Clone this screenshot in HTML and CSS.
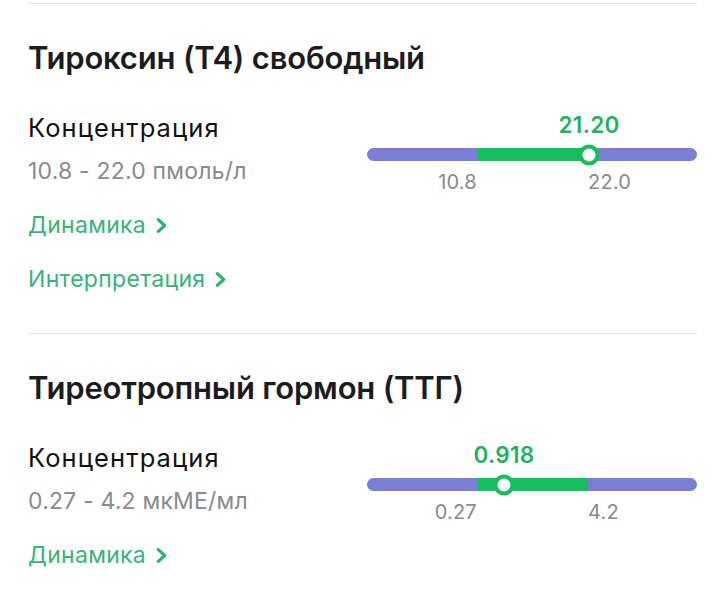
FILE: index.html
```html
<!DOCTYPE html>
<html lang="ru">
<head>
<meta charset="utf-8">
<link rel="stylesheet" href="styles.css">
</head>
<body>
<main class="page">
  <section class="test">
    <h2 class="test-title">Тироксин (Т4) свободный</h2>
    <div class="row">
      <div class="info">
        <div class="param">Концентрация</div>
        <div class="range">10.8 - 22.0 пмоль/л</div>
        <a class="link">Динамика <svg class="chev" viewBox="0 0 10 14"><path d="M2 1.5 L8 7 L2 12.5"/></svg></a>
        <a class="link">Интерпретация <svg class="chev" viewBox="0 0 10 14"><path d="M2 1.5 L8 7 L2 12.5"/></svg></a>
      </div>
      <div class="scale" style="--lo:33.3%;--hi:67%;--val:67.3%">
        <div class="value-row"><span class="value">21.20</span></div>
        <div class="track"><div class="norm"></div><div class="knob"></div></div>
        <div class="labels"><span class="lab lab-lo">10.8</span><span class="lab lab-hi">22.0</span></div>
      </div>
    </div>
  </section>
  <section class="test">
    <h2 class="test-title">Тиреотропный гормон (ТТГ)</h2>
    <div class="row">
      <div class="info">
        <div class="param">Концентрация</div>
        <div class="range">0.27 - 4.2 мкМЕ/мл</div>
        <a class="link">Динамика <svg class="chev" viewBox="0 0 10 14"><path d="M2 1.5 L8 7 L2 12.5"/></svg></a>
      </div>
      <div class="scale" style="--lo:33.3%;--hi:67%;--val:41.5%">
        <div class="value-row"><span class="value">0.918</span></div>
        <div class="track"><div class="norm"></div><div class="knob"></div></div>
        <div class="labels"><span class="lab lab-lo">0.27</span><span class="lab lab-hi">4.2</span></div>
      </div>
    </div>
  </section>
</main>
</body>
</html>
```
FILE: styles.css
```css
* { box-sizing: border-box; }
html, body { margin: 0; padding: 0; background: #fff; }
body {
  font-family: Inter, "Noto Sans", sans-serif;
  color: #1c1c1e;
  overflow: hidden;
}
.page {
  padding: 3px 26px 0 28px;
}
.test {
  border-top: 1px solid #e6e6e6;
  padding: 34px 0 40px;
}
.test-title {
  margin: 0;
  font-size: 31px;
  line-height: 40px;
  font-weight: 600;
  letter-spacing: -0.2px;
}
.row {
  display: flex;
  align-items: flex-start;
  margin-top: 35px;
}
.info {
  flex: 1;
  display: flex;
  flex-direction: column;
  align-items: flex-start;
}
.param {
  font-size: 25.5px;
  line-height: 30px;
  font-weight: 400;
  letter-spacing: 1.1px;
  color: #111;
}
.range {
  margin-top: 14px;
  font-size: 23px;
  line-height: 28px;
  letter-spacing: 0.2px;
  color: #8a8a8e;
}
.link {
  margin-top: 26px;
  font-size: 23px;
  line-height: 28px;
  letter-spacing: 0.3px;
  color: #37b479;
  display: flex;
  align-items: center;
  gap: 10px;
}
.chev {
  width: 11px;
  height: 15px;
  fill: none;
  stroke: #2db36f;
  stroke-width: 2.9;
  stroke-linecap: round;
  stroke-linejoin: round;
}
.scale {
  width: 330px;
  margin-top: -1px;
}
.value-row, .labels {
  position: relative;
  height: 26px;
}
.value {
  position: absolute;
  left: var(--val);
  transform: translateX(-50%);
  font-size: 22.5px;
  line-height: 26px;
  font-weight: 600;
  letter-spacing: 0.3px;
  color: #1fb35e;
}
.track {
  position: relative;
  margin-top: 10px;
  height: 13px;
  border-radius: 7px;
  background: #7a7ed5;
}
.norm {
  position: absolute;
  top: 0;
  bottom: 0;
  left: var(--lo);
  width: calc(var(--hi) - var(--lo));
  background: #15bf5f;
}
.knob {
  position: absolute;
  top: 50%;
  left: var(--val);
  width: 21px;
  height: 21px;
  transform: translate(-50%, -50%);
  border-radius: 50%;
  background: #fff;
  border: 4px solid #15bf5f;
}
.labels {
  margin-top: 10px;
  height: 22px;
}
.lab {
  position: absolute;
  top: 0;
  font-size: 20px;
  line-height: 22px;
  letter-spacing: 0.2px;
  color: #8a8a8e;
}
.lab-lo { right: calc(100% - var(--lo)); }
.lab-hi { left: var(--hi); }
```
